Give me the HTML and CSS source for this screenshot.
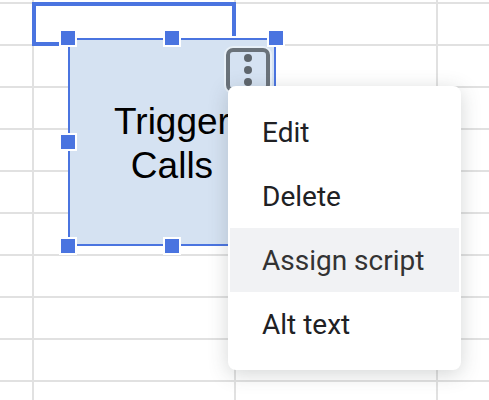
FILE: index.html
```html
<!DOCTYPE html>
<html lang="en">
<head>
    <meta charset="utf-8">
    <title>Sheet</title>
    <link rel="stylesheet" href="styles.css">
</head>
<body>
    <div class="sheet">
        <table class="grid">
            <colgroup>
                <col class="col-first">
                <col class="col-data">
                <col class="col-data">
                <col>
            </colgroup>
            <tbody>
                <tr class="row-cut"><td></td><td></td><td></td><td></td></tr>
                <tr><td></td><td class="selected-cell"></td><td></td><td></td></tr>
                <tr><td></td><td></td><td></td><td></td></tr>
                <tr><td></td><td></td><td></td><td></td></tr>
                <tr><td></td><td></td><td></td><td></td></tr>
                <tr><td></td><td></td><td></td><td></td></tr>
                <tr><td></td><td></td><td></td><td></td></tr>
                <tr><td></td><td></td><td></td><td></td></tr>
                <tr><td></td><td></td><td></td><td></td></tr>
                <tr><td></td><td></td><td></td><td></td></tr>
                <tr><td></td><td></td><td></td><td></td></tr>
            </tbody>
        </table>

        <!-- Drawing placed over the cells -->
        <div class="drawing">
            <div class="drawing-text">Trigger<br>Calls</div>

            <span class="handle top left"></span>
            <span class="handle top center"></span>
            <span class="handle top right"></span>
            <span class="handle middle left"></span>
            <span class="handle middle right"></span>
            <span class="handle bottom left"></span>
            <span class="handle bottom center"></span>
            <span class="handle bottom right"></span>

            <button class="more-button" type="button" aria-label="More options" aria-haspopup="menu">
                <svg width="8" height="32" viewBox="0 0 8 32">
                    <circle cx="4" cy="4" r="4"/>
                    <circle cx="4" cy="16" r="4"/>
                    <circle cx="4" cy="28" r="4"/>
                </svg>
            </button>

            <div class="menu" role="menu">
                <button class="menu-item" type="button" role="menuitem">Edit</button>
                <button class="menu-item" type="button" role="menuitem">Delete</button>
                <button class="menu-item active" type="button" role="menuitem">Assign script</button>
                <button class="menu-item" type="button" role="menuitem">Alt text</button>
            </div>
        </div>
    </div>
</body>
</html>
```

FILE: styles.css
```css
* {
    box-sizing: border-box;
}

body {
    margin: 0;
    background-color: #ffffff;
    font-family: Roboto, "Liberation Sans", sans-serif;
}

.sheet {
    position: relative;
    height: 100vh;
    overflow: hidden;
}

/* Cells */
.grid {
    width: 100%;
    table-layout: fixed;
    border-collapse: separate;
    border-spacing: 0;
}

.col-first {
    width: 34px;
}

.col-data {
    width: 202px;
}

.grid td {
    height: 42px;
    padding: 0;
    border-right: 2px solid #e1e1e1;
    border-bottom: 2px solid #e1e1e1;
}

.grid td:last-child {
    border-right: none;
}

.grid .row-cut td {
    height: 4px;
}

.grid .selected-cell {
    position: relative;
}

.selected-cell::after {
    content: "";
    position: absolute;
    inset: -2px;
    border: 4px solid #4a74e0;
}

/* Drawing */
.drawing {
    position: absolute;
    top: 38px;
    left: 68px;
    width: 208px;
    height: 208px;
    display: flex;
    align-items: center;
    justify-content: center;
    padding-top: 4px;
    background-color: #d5e2f2;
    border: 2px solid #4a74e0;
    box-shadow: 0 -2px 0 #ffffff;
}

.drawing-text {
    font-family: "Liberation Sans", Arial, sans-serif;
    font-size: 37px;
    line-height: 44px;
    text-align: center;
    color: #000000;
}

.handle {
    position: absolute;
    width: 18px;
    height: 18px;
    background-color: #4a74e0;
    border: 2px solid #ffffff;
}

.handle.top {
    top: -11px;
}

.handle.middle {
    top: 93px;
}

.handle.bottom {
    bottom: -11px;
}

.handle.left {
    left: -11px;
}

.handle.center {
    left: 93px;
}

.handle.right {
    right: -11px;
}

.more-button {
    position: absolute;
    top: 8px;
    right: 4px;
    width: 44px;
    height: 44px;
    display: flex;
    align-items: center;
    justify-content: center;
    padding: 0;
    background-color: #d5e2f2;
    border: 4px solid #6a727a;
    border-radius: 7px;
    box-shadow: 0 0 0 2px #e8f0f8;
    cursor: pointer;
}

.more-button svg {
    flex: none;
    fill: #5f666d;
}

/* Menu */
.menu {
    position: absolute;
    top: 46px;
    left: 158px;
    width: 233px;
    padding: 14px 2px;
    background-color: #ffffff;
    border-radius: 8px;
    box-shadow: 0 4px 20px rgba(60, 70, 70, 0.22);
}

.menu-item {
    display: block;
    width: 100%;
    height: 64px;
    padding: 0 0 0 32px;
    background: none;
    border: none;
    font-family: inherit;
    font-size: 28px;
    text-align: left;
    white-space: nowrap;
    color: #202124;
    cursor: pointer;
}

.menu-item:hover,
.menu-item.active {
    background-color: #f1f2f4;
    color: #333333;
}
```
